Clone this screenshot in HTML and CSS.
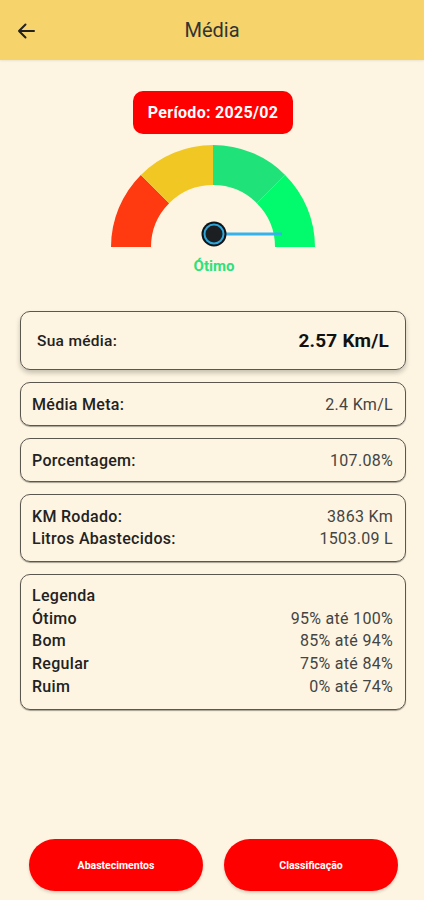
FILE: index.html
```html
<!DOCTYPE html>
<html lang="pt-BR">

<head>
    <meta charset="UTF-8">
    <meta name="viewport" content="width=device-width, initial-scale=1.0">
    <title>Média</title>
    <link rel="stylesheet" href="styles.css">
</head>

<body>
    <div class="page">
        <header class="topbar">
            <button class="back" aria-label="Voltar">
                <svg width="18" height="16" viewBox="0 0 18 16">
                    <path d="M17 8H2M8.5 1.5L2 8l6.5 6.5" fill="none" stroke="#222" stroke-width="2" stroke-linecap="round" stroke-linejoin="round"/>
                </svg>
            </button>
            <h1>Média</h1>
        </header>

        <main class="content">
            <div class="periodo">Período: 2025/02</div>

            <svg class="gauge" width="208" height="106" viewBox="0 0 208 106">
                <path d="M2 104 A102 102 0 0 1 31.88 31.88 L60.16 60.16 A62 62 0 0 0 42 104 Z" fill="#ff3a10"/>
                <path d="M31.88 31.88 A102 102 0 0 1 104 2 L104 42 A62 62 0 0 0 60.16 60.16 Z" fill="#f1c823"/>
                <path d="M104 2 A102 102 0 0 1 176.12 31.88 L147.84 60.16 A62 62 0 0 0 104 42 Z" fill="#1fe378"/>
                <path d="M176.12 31.88 A102 102 0 0 1 206 104 L166 104 A62 62 0 0 0 147.84 60.16 Z" fill="#02fb6c"/>
                <line x1="105" y1="91" x2="173" y2="91" stroke="#35b2ee" stroke-width="3"/>
                <circle cx="105" cy="91" r="12.5" fill="#0f1418"/>
                <circle cx="105" cy="91" r="9.5" fill="#1b1f22" stroke="#2fa6da" stroke-width="2"/>
            </svg>
            <div class="status">Ótimo</div>

            <div class="card destaque">
                <span class="label">Sua média:</span>
                <span class="valor">2.57 Km/L</span>
            </div>

            <div class="card">
                <span class="label">Média Meta:</span>
                <span class="valor">2.4 Km/L</span>
            </div>

            <div class="card">
                <span class="label">Porcentagem:</span>
                <span class="valor">107.08%</span>
            </div>

            <div class="card lista">
                <div class="linha"><span class="label">KM Rodado:</span><span class="valor">3863 Km</span></div>
                <div class="linha"><span class="label">Litros Abastecidos:</span><span class="valor">1503.09 L</span></div>
            </div>

            <div class="card lista legenda">
                <div class="linha"><span class="label">Legenda</span></div>
                <div class="linha"><span class="label">Ótimo</span><span class="valor">95% até 100%</span></div>
                <div class="linha"><span class="label">Bom</span><span class="valor">85% até 94%</span></div>
                <div class="linha"><span class="label">Regular</span><span class="valor">75% até 84%</span></div>
                <div class="linha"><span class="label">Ruim</span><span class="valor">0% até 74%</span></div>
            </div>
        </main>

        <footer class="acoes">
            <button class="btn">Abastecimentos</button>
            <button class="btn">Classificação</button>
        </footer>
    </div>
</body>

</html>
```
FILE: styles.css
```css
body {
    font-family: Roboto, "Noto Sans", Arial, sans-serif;
    background-color: #fdf5e1;
    margin: 0;
    color: #222;
}

.page {
    display: flex;
    flex-direction: column;
    min-height: 900px;
}

.topbar {
    height: 60px;
    background-color: #f6d46b;
    display: flex;
    align-items: center;
    justify-content: center;
    position: relative;
    box-shadow: 0 1px 2px rgba(0, 0, 0, 0.08);
}

.topbar h1 {
    margin: 0;
    font-size: 20px;
    font-weight: 400;
    color: #333;
}

.back {
    position: absolute;
    left: 8px;
    top: 14px;
    width: 36px;
    height: 34px;
    background: none;
    border: none;
    padding: 0;
    display: flex;
    align-items: center;
    justify-content: center;
}

.content {
    display: flex;
    flex-direction: column;
    align-items: center;
    padding: 31px 18px 0 20px;
}

.periodo {
    background-color: #ff0000;
    color: #fff;
    font-weight: 700;
    font-size: 16px;
    letter-spacing: 0.3px;
    width: 160px;
    height: 43px;
    border-radius: 10px;
    display: flex;
    align-items: center;
    justify-content: center;
}

.gauge {
    margin-top: 9px;
    display: block;
}

.status {
    color: #2fe07c;
    font-weight: 700;
    font-size: 15px;
    line-height: 17px;
    margin-top: 9px;
    padding-left: 2px;
}

.card {
    align-self: stretch;
    border: 1px solid #5a5650;
    border-radius: 10px;
    display: flex;
    align-items: center;
    justify-content: space-between;
    padding: 0 12px 0 11px;
    height: 42px;
    margin-top: 12px;
    box-shadow: 0 1px 1px rgba(0, 0, 0, 0.35);
    font-size: 16px;
    letter-spacing: 0.3px;
}

.card.destaque {
    height: 57px;
    padding: 0 16px 0 16px;
    margin-top: 36px;
    box-shadow: 0 3px 5px rgba(0, 0, 0, 0.22);
}

.destaque .label {
    font-size: 15.5px;
}

.destaque .valor {
    font-size: 19px;
    font-weight: 700;
    color: #111;
    letter-spacing: 0.2px;
}

.label {
    font-weight: 500;
    color: #222;
}

.valor {
    color: #444;
}

.lista {
    height: auto;
    flex-direction: column;
    align-items: stretch;
    padding: 11px 12px 11px 11px;
}

.legenda {
    padding: 10px 12px 10px 11px;
}

.linha {
    display: flex;
    justify-content: space-between;
    line-height: 22px;
}

.legenda .linha {
    line-height: 22.7px;
}

.acoes {
    margin-top: auto;
    display: flex;
    justify-content: center;
    gap: 21px;
    padding: 0 0 9px 3px;
}

.btn {
    width: 174px;
    height: 52px;
    border: none;
    border-radius: 26px;
    background-color: #ff0000;
    color: #fff;
    font-family: Roboto, Arial, sans-serif;
    font-weight: 700;
    font-size: 10.5px;
    box-shadow: 0 2px 3px rgba(0, 0, 0, 0.15);
}
```
